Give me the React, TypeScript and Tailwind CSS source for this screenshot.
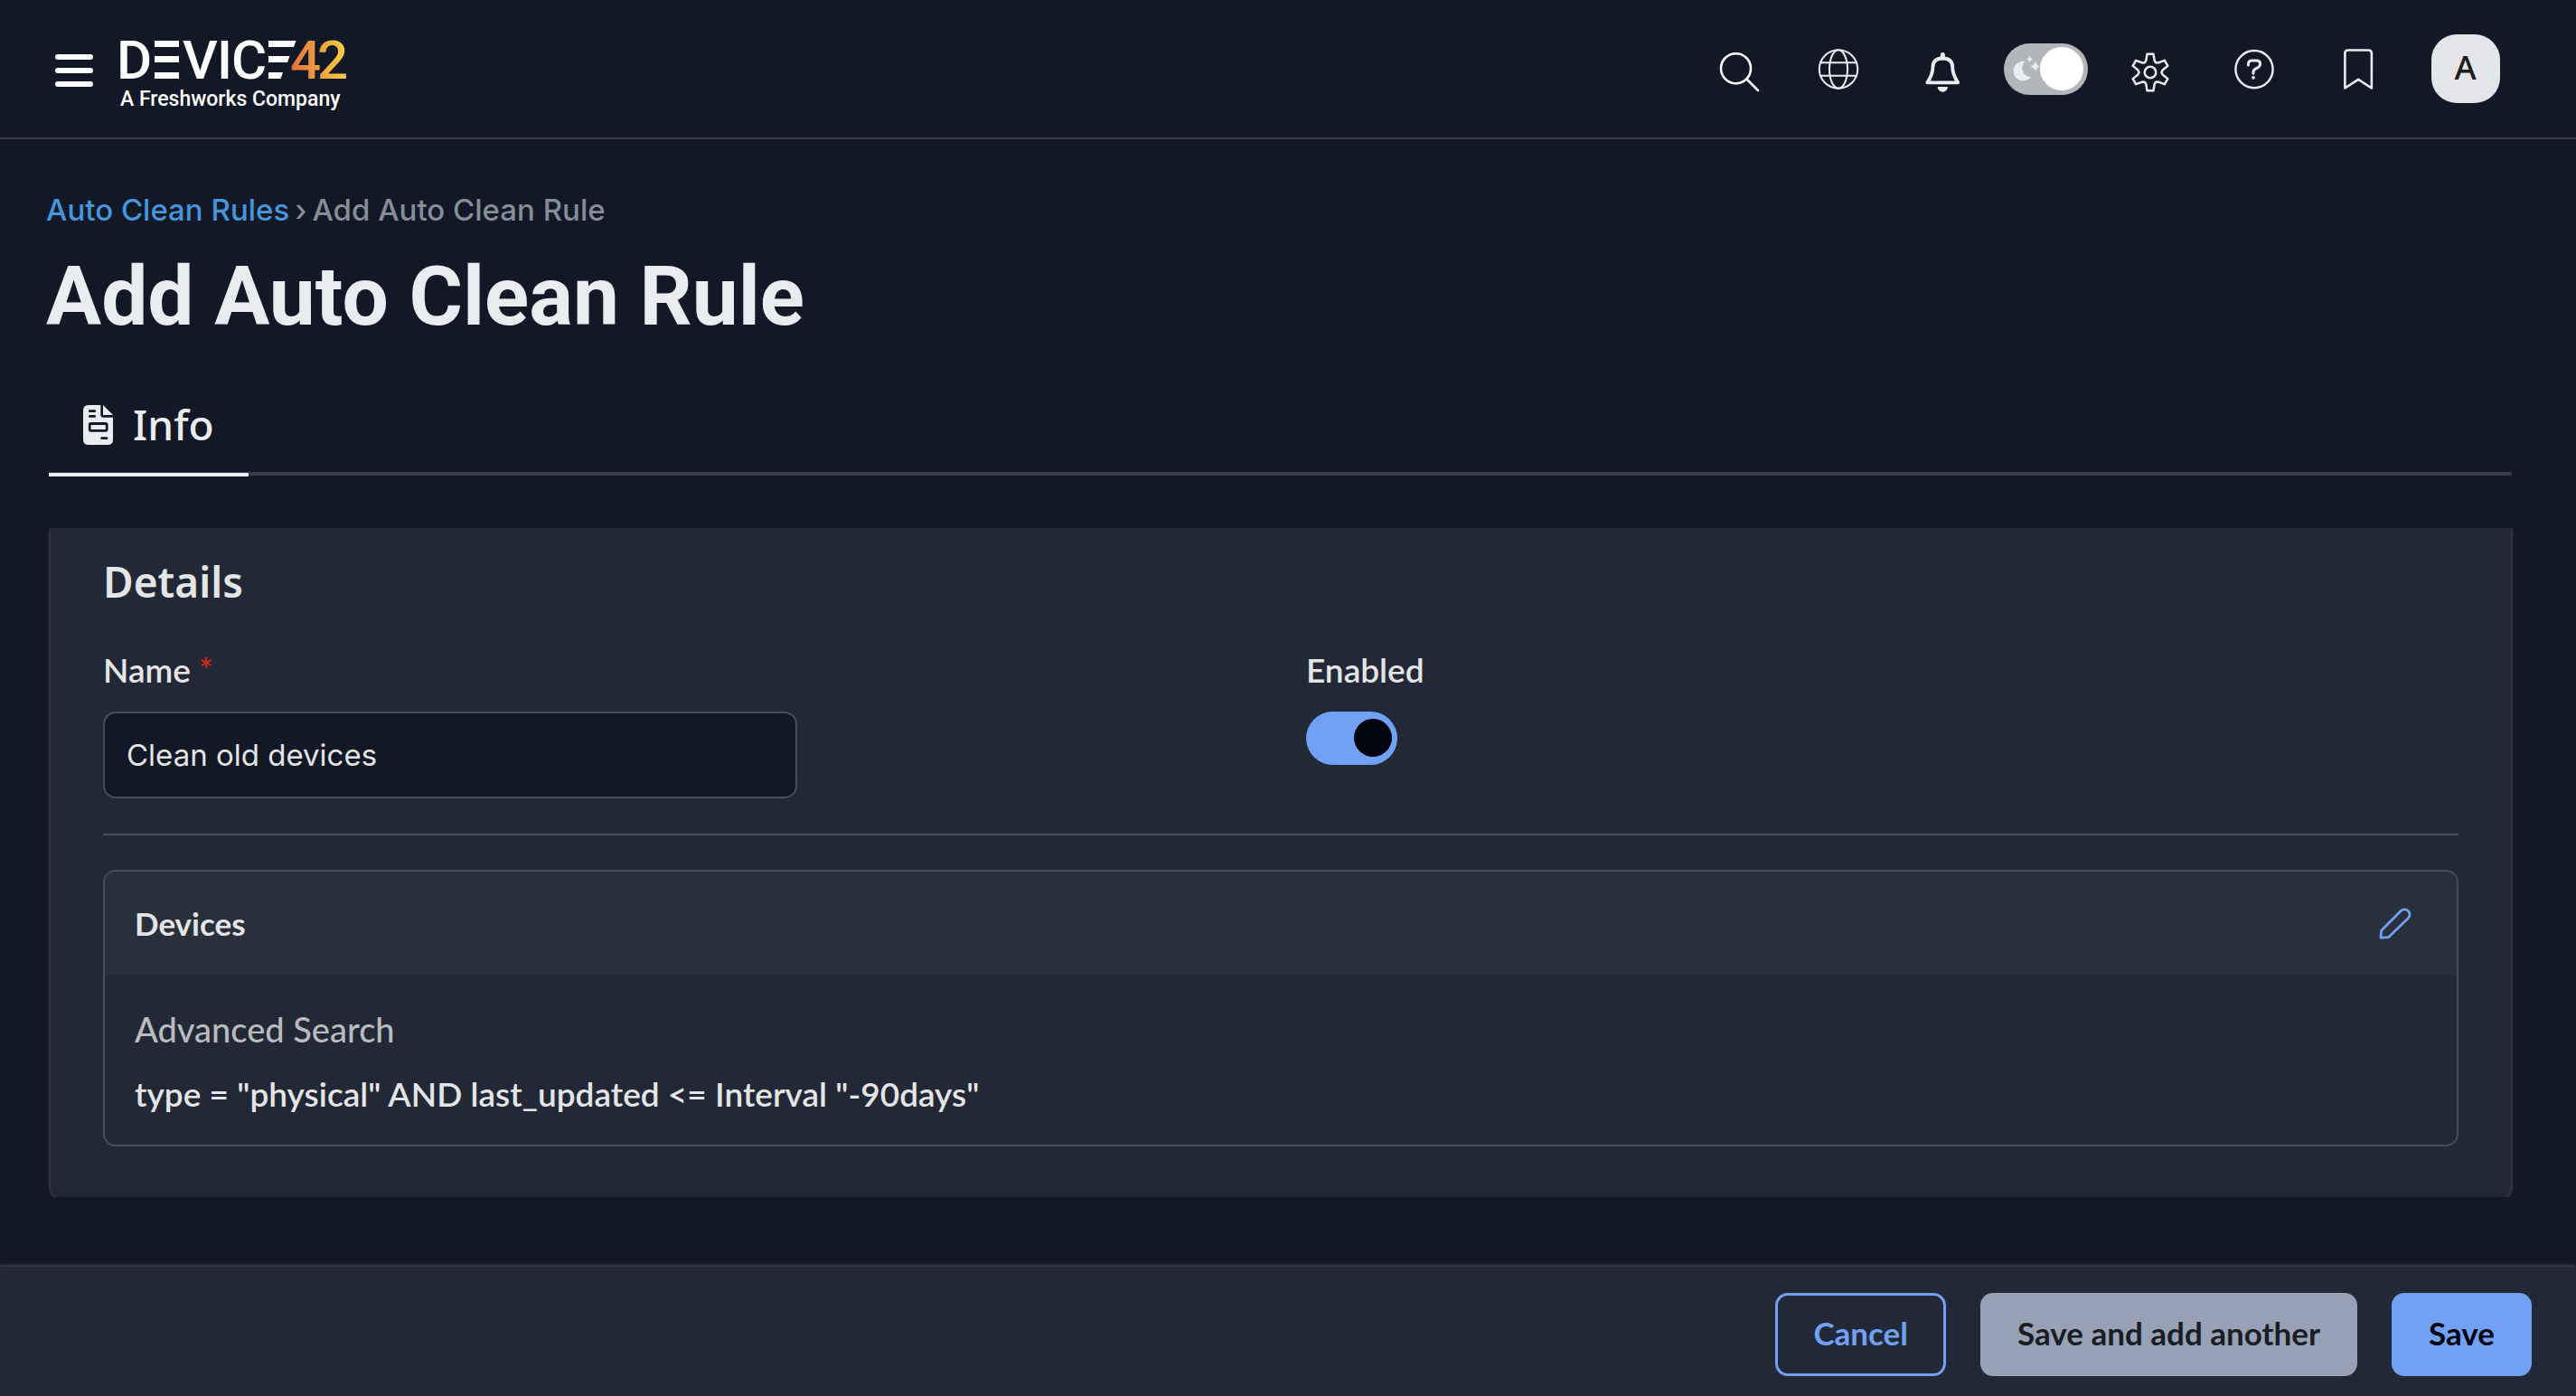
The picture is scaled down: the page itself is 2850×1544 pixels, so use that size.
import React, { useState } from "react";

const GEAR_TOOTH: [number, number][] = [
  [-4.7, -13],
  [-3.5, -20.3],
  [3.5, -20.3],
  [4.7, -13],
  [6.2, -10.7],
];

const gearPoints = [0, 1, 2, 3, 4, 5]
  .flatMap((turn) => {
    const a = (turn * Math.PI) / 3;
    return GEAR_TOOTH.map(([x, y]) => {
      const px = x * Math.cos(a) - y * Math.sin(a) + 28;
      const py = x * Math.sin(a) + y * Math.cos(a) + 32;
      return `${px.toFixed(2)},${py.toFixed(2)}`;
    });
  })
  .join(" ");

type IconProps = { children: React.ReactNode; width?: number };

function Icon({ children, width = 2.4 }: IconProps) {
  return (
    <svg
      viewBox="0 0 56 56"
      className="size-14"
      fill="none"
      stroke="currentColor"
      strokeWidth={width}
      strokeLinecap="round"
      strokeLinejoin="round"
      aria-hidden="true"
    >
      {children}
    </svg>
  );
}

function HeaderButton({ label, children }: { label: string; children: React.ReactNode }) {
  return (
    <div className="flex w-[115px] justify-center">
      <button type="button" aria-label={label} className="text-[#ebecf0]">
        {children}
      </button>
    </div>
  );
}

function Logo() {
  return (
    <svg viewBox="-8 -14 268 94" className="h-[94px] w-[268px]" role="img" aria-label="Device42, A Freshworks Company">
      <defs>
        <linearGradient id="amber" gradientUnits="userSpaceOnUse" x1="190" y1="0" x2="250" y2="0">
          <stop offset="0" stopColor="#e0733f" />
          <stop offset="0.5" stopColor="#eda03e" />
          <stop offset="1" stopColor="#f6cf46" />
        </linearGradient>
      </defs>
      <g fill="#ffffff" fontFamily="Roboto, sans-serif" fontSize="60" fontWeight="500">
        <text x="-4" y="44">D</text>
        <text x="69" y="44">V</text>
        <text x="107" y="44">I</text>
        <text x="123" y="44">C</text>
      </g>
      <g fill="#ffffff">
        <rect x="38" y="2" width="27" height="7" />
        <rect x="38" y="19" width="27" height="7" />
        <rect x="38" y="37" width="27" height="7" />
        <polygon points="164,2 194.500,2 192,9 164,9" />
        <polygon points="164,19 187.500,19 185,26 164,26" />
        <polygon points="164,37 180,37 177.500,44 164,44" />
      </g>
      <g fill="url(#amber)" fontFamily="Roboto, sans-serif" fontSize="60" fontWeight="500">
        <text x="188" y="44">4</text>
        <text x="218" y="44">2</text>
      </g>
      <text x="0" y="74" fill="#ffffff" fontFamily="Roboto, sans-serif" fontSize="23" fontWeight="500">
        A Freshworks Company
      </text>
    </svg>
  );
}

function Header() {
  const [dark, setDark] = useState(true);
  return (
    <header className="flex h-[154px] items-center justify-between border-b-2 border-[#373b48] px-[61px]">
      <div className="flex items-center gap-[22px]">
        <button type="button" aria-label="Open menu" className="flex h-10 w-[42px] flex-col justify-end gap-[9px]">
          <span className="h-1.5 w-full rounded-full bg-white" />
          <span className="h-1.5 w-full rounded-full bg-white" />
          <span className="h-1.5 w-full rounded-full bg-white" />
        </button>
        <Logo />
      </div>
      <div className="flex items-center">
        <div className="flex w-[103px] justify-center">
          <button type="button" aria-label="Search" className="text-white">
            <Icon width={2.6}>
              <circle cx="23.5" cy="27.7" r="16.5" />
              <path d="M35.500 39.500 L48 52" />
            </Icon>
          </button>
        </div>
        <HeaderButton label="Language">
          <Icon width={2}>
            <circle cx="28" cy="28.5" r="21.2" />
            <ellipse cx="28" cy="28.5" rx="10" ry="21.2" />
            <path d="M8 21.300 H48 M8 35.700 H48" />
          </Icon>
        </HeaderButton>
        <HeaderButton label="Notifications">
          <Icon width={3.8}>
            <path d="M11.300 43.300 C15.500 37 17.400 33 17.400 26.500 C17.400 19.500 21.500 16.500 28.300 16.500 S39.200 19.500 39.200 26.500 C39.200 33 41 37 45.300 43.300 Z" />
            <path d="M28.300 12.500 V16" strokeWidth="5" />
            <path d="M22.700 48 H34 A5.650 5.650 0 0 1 22.700 48 Z" fill="currentColor" stroke="none" />
          </Icon>
        </HeaderButton>
        <div className="flex w-[115px] justify-center">
          <label className="relative block h-[57px] w-[93px]">
            <input
              type="checkbox"
              role="switch"
              aria-label="Dark mode"
              checked={dark}
              onChange={(e) => setDark(e.target.checked)}
              className="peer block size-full appearance-none rounded-full bg-[#b2b5ba]"
            />
            <svg viewBox="0 0 30 30" className="absolute top-3 left-2.5 size-[30px]" fill="#ebecf0" aria-hidden="true">
              <path d="M13.500 8 A10.800 10.800 0 1 0 20 25 A9.800 9.800 0 0 1 13.500 8 Z" />
              <path d="M18.500 1.500 Q19 5 22.500 5.500 Q19 6 18.500 9.500 Q18 6 14.500 5.500 Q18 5 18.500 1.500 Z" />
              <path d="M25 7.500 Q25.800 12.200 30 13.500 Q25.800 14.800 25 19.500 Q24.200 14.800 19 13.500 Q24.200 12.200 25 7.500 Z" />
            </svg>
            <span className="pointer-events-none absolute top-1 right-10 size-12 rounded-full bg-white peer-checked:right-[5px]" />
          </label>
        </div>
        <HeaderButton label="Settings">
          <Icon width={2.5}>
            <polygon points={gearPoints} />
            <circle cx="28" cy="32" r="6.300" />
          </Icon>
        </HeaderButton>
        <HeaderButton label="Help">
          <Icon>
            <circle cx="28" cy="28.600" r="20.600" />
            <path d="M21.400 24 V23.200 C21.400 20.200 23 19 25.400 19 H30.600 C33.200 19 34.600 20.600 34.600 22.800 C34.600 28.400 27 27 27 31.500 V33.200" strokeWidth="3" />
            <circle cx="27" cy="37.800" r="1.900" fill="currentColor" stroke="none" />
          </Icon>
        </HeaderButton>
        <HeaderButton label="Bookmarks">
          <Icon width={2.6}>
            <path d="M13.400 49.500 V11 Q13.400 7.500 16.900 7.500 H39.400 Q42.900 7.500 42.900 11 V49.500 L28.200 39.800 Z" />
          </Icon>
        </HeaderButton>
        <div className="flex w-[123px] justify-center">
          <button
            type="button"
            aria-label="Account A"
            className="size-[76px] rounded-[28px] bg-[#e4e5e9] pb-1 font-['Noto_Sans',sans-serif] text-[37px] font-medium text-[#1d1d1a]"
          >
            A
          </button>
        </div>
      </div>
    </header>
  );
}

function DocumentIcon() {
  return (
    <svg viewBox="0 0 33 44" className="h-11 w-[33px]" aria-hidden="true">
      <path fill="#ebecf0" d="M6 0 H19.300 V10.700 Q19.300 13.700 22.300 13.700 H33 V38 Q33 44 27 44 H6 Q0 44 0 38 V6 Q0 0 6 0 Z" />
      <path fill="#ebecf0" d="M22 0 L33 11 H22 Z" />
      <g fill="#121825">
        <rect x="6" y="5.300" width="8" height="2.700" rx="1.300" />
        <rect x="6" y="11" width="8" height="2.700" rx="1.300" />
        <rect x="19.300" y="35.300" width="8" height="2.700" rx="1.300" />
      </g>
      <rect x="7.200" y="20.500" width="19" height="7.800" rx="1.500" fill="none" stroke="#121825" strokeWidth="2.800" />
    </svg>
  );
}

export default function App() {
  const [name, setName] = useState("Clean old devices");
  const [enabled, setEnabled] = useState(true);

  return (
    <div className="flex min-h-screen flex-col bg-[#121825] font-['Lato',sans-serif] text-[#e4e5e6]">
      <Header />
      <main className="grow pt-[58px] pr-[68px] pb-14 pl-[51px]">
        <nav aria-label="Breadcrumb" className="flex gap-1.5 font-['Inter',sans-serif] text-[33px] leading-10 font-medium text-[#848e98]">
          <a href="#rules" className="text-[#4795dc]">
            Auto Clean Rules
          </a>
          <span aria-hidden="true">›</span>
          <span aria-current="page">Add Auto Clean Rule</span>
        </nav>
        <h1 className="mt-6 font-['Roboto',sans-serif] text-[91px] leading-[104px] font-bold text-[#ebecf0]">
          Add Auto Clean Rule
        </h1>
        <div role="tablist" className="mt-10 mr-[3px] ml-[3px] flex border-b-4 border-[#393b48]">
          <button
            type="button"
            role="tab"
            aria-selected="true"
            className="-mb-[5px] flex h-[107px] items-center gap-[22px] border-b-4 border-[#ebecf0] px-[38px] pb-1 font-['Noto_Sans',sans-serif] text-[46px] font-medium text-[#ebecf0]"
          >
            <DocumentIcon />
            Info
          </button>
        </div>

        <form id="rule" className="mt-[58px] ml-px overflow-hidden px-1" onSubmit={(e) => e.preventDefault()}>
          <div className="-mb-1 rounded-b-2xl bg-[#222835] px-[58px] pt-[31px] pb-[60px] shadow-[0_0_4px_#6b6b6b]">
            <h2 className="font-['Noto_Sans',sans-serif] text-[46px] leading-[56px] font-semibold">Details</h2>
            <div className="mt-[46px] grid grid-cols-2 gap-14">
              <div>
                <label htmlFor="name" className="block text-[37px] leading-[48px] font-semibold">
                  Name <span className="text-[#c4281c]">*</span>
                </label>
                <input
                  id="name"
                  type="text"
                  required
                  value={name}
                  onChange={(e) => setName(e.target.value)}
                  className="mt-[22px] block h-24 w-[768px] max-w-full rounded-[14px] border-2 border-[#464c58] bg-[#121825] px-6 font-['Inter',sans-serif] text-[33px]"
                />
              </div>
              <div>
                <label htmlFor="enabled" className="block text-[37px] leading-[48px] font-semibold">
                  Enabled
                </label>
                <div className="relative mt-[22px] h-[59px] w-[101px]">
                  <input
                    id="enabled"
                    type="checkbox"
                    role="switch"
                    checked={enabled}
                    onChange={(e) => setEnabled(e.target.checked)}
                    className="peer block size-full appearance-none rounded-full bg-[#98a2b6] checked:bg-[#71a1f5]"
                  />
                  <span className="pointer-events-none absolute top-2 right-[53px] size-[42px] rounded-full bg-[#02040f] peer-checked:right-1.5" />
                </div>
              </div>
            </div>
            <hr className="mt-[39px] border-t-2 border-[#464c58]" />
            <section className="mt-[38px] overflow-hidden rounded-[14px] border-2 border-[#464c58]">
              <div className="flex h-[115px] items-center justify-between bg-[#2a303b] pr-[50px] pl-[33px]">
                <h3 className="text-[35px] font-bold">Devices</h3>
                <button type="button" aria-label="Edit devices" className="text-[#71a1f5]">
                  <svg
                    viewBox="0 0 36 36"
                    className="size-9"
                    fill="none"
                    stroke="currentColor"
                    strokeWidth="2.800"
                    strokeLinejoin="round"
                    aria-hidden="true"
                  >
                    <path d="M2 33.200 L2.600 25.200 L24.200 3.600 A5.300 5.300 0 0 1 32.400 11.600 L10.600 32.600 Z" />
                  </svg>
                </button>
              </div>
              <div className="flex flex-col gap-6 px-[33px] pt-[35px] pb-8 leading-[48px]">
                <p className="text-[38px] leading-[48px] font-medium text-[#b9bbbf]">Advanced Search</p>
                <p className="text-[37px] leading-[48px] font-semibold">
                  type = "physical" AND last_updated &lt;= Interval "-90days"
                </p>
              </div>
            </section>
          </div>
        </form>
      </main>

      <footer className="flex justify-end gap-[38px] bg-[#222835] pt-[29px] pr-[49px] pb-[22px] text-[35px] font-bold shadow-[0_0_5px_#6b6b6b]">
        <button type="button" className="h-[92px] rounded-[14px] border-3 border-[#71a1f5] px-[39px] pb-1 text-[#71a1f5]">
          Cancel
        </button>
        <button type="submit" form="rule" className="h-[92px] rounded-[14px] bg-[#98a2b6] px-[41px] pb-1 text-[#1a1d24]">
          Save and add another
        </button>
        <button type="submit" form="rule" className="h-[92px] rounded-[14px] bg-[#71a1f5] px-[41px] pb-1 text-[#02040f]">
          Save
        </button>
      </footer>
    </div>
  );
}
